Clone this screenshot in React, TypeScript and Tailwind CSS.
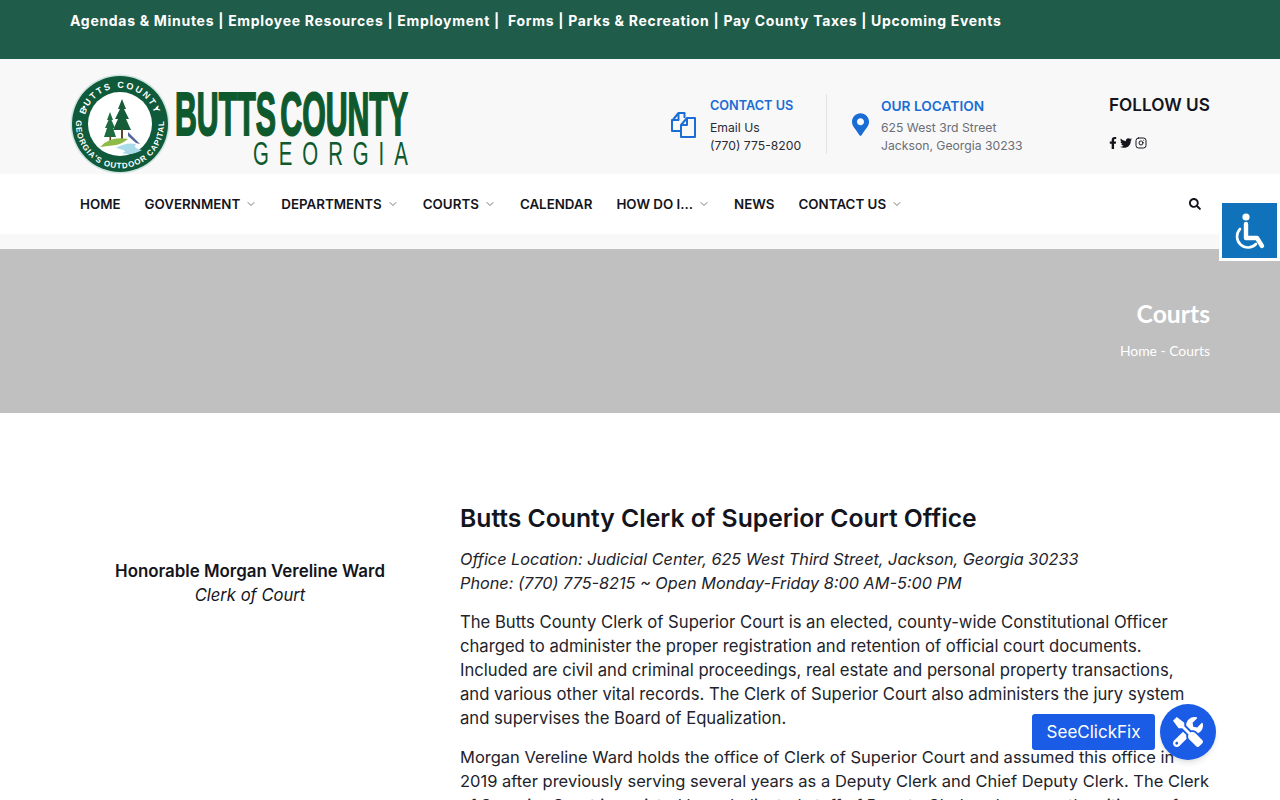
import { ChevronDown, Instagram } from "lucide-react";
import { FaFacebookF, FaTwitter, FaSearch, FaTools, FaMapMarkerAlt } from "react-icons/fa";

const TOP_LINKS = "Agendas & Minutes | Employee Resources | Employment |  Forms | Parks & Recreation | Pay County Taxes | Upcoming Events";

const NAV = [
  { label: "HOME", caret: false },
  { label: "GOVERNMENT", caret: true },
  { label: "DEPARTMENTS", caret: true },
  { label: "COURTS", caret: true },
  { label: "CALENDAR", caret: false },
  { label: "HOW DO I...", caret: true },
  { label: "NEWS", caret: false },
  { label: "CONTACT US", caret: true },
];

function Logo() {
  return (
    <svg width="340" height="100" viewBox="0 0 340 100" className="shrink-0">
      <defs>
        <path id="topArc" d="M 14 50 A 36 36 0 0 1 86 50" />
        <path id="bottomArc" d="M 7 41 A 44 44 0 1 0 93 41" />
      </defs>
      <circle cx="50" cy="50" r="49.5" fill="#cfe3e0" />
      <circle cx="50" cy="50" r="48" fill="#0e5a3a" />
      <circle cx="50" cy="50" r="32" fill="#ffffff" />
      <text fontFamily="'Liberation Sans', sans-serif" fontWeight="700" fontSize="9" fill="#ffffff" letterSpacing="2">
        <textPath href="#topArc" startOffset="50%" textAnchor="middle">BUTTS COUNTY</textPath>
      </text>
      <text fontFamily="'Liberation Sans', sans-serif" fontWeight="700" fontSize="8" fill="#ffffff" letterSpacing="0.85">
        <textPath href="#bottomArc" startOffset="50%" textAnchor="middle">GEORGIA'S OUTDOOR CAPITAL</textPath>
      </text>
      <circle cx="14" cy="33" r="1.3" fill="#ffffff" />
      <circle cx="87" cy="34" r="1.3" fill="#ffffff" />
      {/* trees and water */}
      <path d="M52 25 L56 35 L54 35 L59 45 L56 45 L61 56 L43 56 L48 45 L45 45 L50 35 L48 35 Z" fill="#175c38" />
      <path d="M40 38 L43 46 L41.5 46 L45 54 L43 54 L46 63 L34 63 L37 54 L35 54 L38.5 46 L37 46 Z" fill="#1f6b41" />
      <rect x="51" y="55" width="2" height="10" fill="#5a4a2c" />
      <rect x="39.5" y="62" width="1.6" height="5" fill="#5a4a2c" />
      <path d="M30 73 Q40 62 58 65 Q52 70 46 71 Q38 72 30 73 Z" fill="#8dbb45" />
      <path d="M46 74 Q56 68 66 70 Q62 74 72 76 Q62 82 52 79 Q60 77 46 74 Z" fill="#a9dbe9" />
      <path d="M58 58 L70 70 L66 69 L58 62 Z" fill="#54679a" />
      <text x="105" y="61" fontFamily="'Liberation Sans', sans-serif" fontWeight="700" fontSize="62" fill="#0e5a2e" textLength="233" lengthAdjust="spacingAndGlyphs" stroke="#0e5a2e" strokeWidth="2" wordSpacing="-8">BUTTS COUNTY</text>
      <text transform="translate(183 91) scale(0.6 1)" fontFamily="'Liberation Sans', sans-serif" fontSize="34" fill="#0e5a2e" textLength="258" lengthAdjust="spacing">GEORGIA</text>
    </svg>
  );
}

function CopyIcon() {
  return (
    <svg width="28" height="28" viewBox="0 0 28 28" fill="none" stroke="#1a6dd4" strokeWidth="2" strokeLinejoin="round" className="shrink-0">
      <path d="M2 11 L8.5 3 H14.5 V8" />
      <path d="M8.5 3 V10 H2 V21 H11" />
      <path d="M11 15 L17 8 H25 V27 H11 Z" />
      <path d="M17 8 V15 H11" />
    </svg>
  );
}

function WheelchairIcon() {
  return (
    <svg width="55" height="55" viewBox="0 0 55 55" fill="none" stroke="#ffffff" strokeLinecap="round" strokeLinejoin="round">
      <circle cx="24" cy="14" r="3.6" fill="#ffffff" stroke="none" />
      <path d="M24 21 V35 H35 L40 43" strokeWidth="4.4" />
      <path d="M18 26 A10.5 10.5 0 1 0 34 41" strokeWidth="2.6" />
    </svg>
  );
}

export default function App() {
  return (
    <div className="min-h-screen bg-white font-['Inter',sans-serif] text-[#14151c]">
      {/* top strip */}
      <div className="h-[59px] bg-[#1f5c4a] pl-[70px] pt-[12px]">
        <p className="whitespace-pre text-[14px] leading-[17px] font-bold tracking-[0.7px] text-white">{TOP_LINKS}</p>
      </div>

      {/* logo + contact */}
      <header className="flex h-[115px] items-center bg-[#f8f8f8] px-[70px] pt-[15px]">
        <Logo />
        <div className="ml-[260px] flex items-center gap-[12px]">
          <CopyIcon />
          <div className="w-[116px] pt-[2px]">
            <p className="text-[12.7px] leading-[20px] font-semibold text-[#1a6dd4]">CONTACT US</p>
            <p className="mt-[3px] text-[12.2px] leading-[18px] text-[#2a2a33]">Email Us<br />(770) 775-8200</p>
          </div>
        </div>
        <div className="h-[60px] w-px bg-[#e2e2e2]" />
        <div className="ml-[25px] flex items-center gap-[12px]">
          <FaMapMarkerAlt className="h-[23px] w-[17px] text-[#1a6dd4]" />
          <div className="w-[215px] pt-[3px]">
            <p className="text-[13.7px] leading-[20px] font-semibold text-[#1a6dd4]">OUR LOCATION</p>
            <p className="mt-[3px] text-[12.2px] leading-[18px] text-[#6c6d75]">625 West 3rd Street<br />Jackson, Georgia 30233</p>
          </div>
        </div>
        <div className="ml-auto -mt-[6px] w-[101px]">
          <p className="text-[17.2px] leading-[24px] font-semibold whitespace-nowrap">FOLLOW US</p>
          <div className="mt-[20px] flex items-center gap-[3px] text-[12px]">
            <FaFacebookF className="w-[8px]" />
            <FaTwitter />
            <Instagram className="size-[12px]" />
          </div>
        </div>
      </header>

      {/* main nav */}
      <nav className="flex h-[60px] items-center bg-white pl-[80px] pr-[79px]">
        <ul className="flex items-center gap-[24px]">
          {NAV.map((item) => (
            <li key={item.label} className="flex items-center gap-[5px] text-[13.35px] leading-[20px] font-semibold whitespace-nowrap">
              {item.label}
              {item.caret && <ChevronDown className="size-[12px] text-[#777777]" />}
            </li>
          ))}
        </ul>
        <FaSearch className="ml-auto text-[12px]" />
      </nav>
      <div className="h-[15px] bg-[#f8f8f8]" />

      {/* page title */}
      <section className="flex h-[164px] flex-col items-end bg-[#c0c0c0] pt-[49px] pr-[70px] text-white font-['Lato',sans-serif]">
        <h1 className="text-[24.7px] leading-[32px] font-bold">Courts</h1>
        <p className="mt-[11px] text-[13.9px] leading-[20px]">Home - Courts</p>
      </section>

      {/* content */}
      <main className="flex items-start px-[70px] pt-[89px]">
        <aside className="w-[360px] shrink-0 pt-[57px] text-center leading-[24px]">
          <p className="text-[16.9px] font-semibold">Honorable Morgan Vereline Ward</p>
          <p className="text-[16.6px] italic">Clerk of Court</p>
        </aside>
        <article className="ml-[30px] w-[750px] text-[16.5px] leading-[24px] text-[#22232b]">
          <h2 className="text-[24.7px] leading-[32px] font-semibold text-[#14151c]">Butts County Clerk of Superior Court Office</h2>
          <p className="mt-[13px] text-[16.25px] italic">
            Office Location: Judicial Center, 625 West Third Street, Jackson, Georgia 30233<br />
            Phone: (770) 775-8215 ~ Open Monday-Friday 8:00 AM-5:00 PM
          </p>
          <p className="mt-[15px] text-[16.65px]">
            The Butts County Clerk of Superior Court is an elected, county-wide Constitutional Officer charged to administer the proper registration and retention of official court documents.<br />
            Included are civil and criminal proceedings, real estate and personal property transactions,<br />
            and various other vital records. The Clerk of Superior Court also administers the jury system<br />
            and supervises the Board of Equalization.
          </p>
          <p className="mt-[15px]">
            Morgan Vereline Ward holds the office of Clerk of Superior Court and assumed this office in 2019 after previously serving several years as a Deputy Clerk and Chief Deputy Clerk. The Clerk of Superior Court is assisted by a dedicated staff of Deputy Clerks who serve the citizens of Butts County.
          </p>
        </article>
      </main>

      {/* floating widgets */}
      <div className="fixed top-[200px] right-0 border-[3px] border-white bg-[#0f72ba]">
        <WheelchairIcon />
      </div>
      <div className="fixed right-[64px] bottom-[40px] flex items-center">
        <a className="flex h-[36px] w-[123px] items-center justify-center rounded-[3px] bg-[#1a5ce6] pt-[1px] text-[17px] text-white">SeeClickFix</a>
        <span className="ml-[5px] flex size-[56px] items-center justify-center rounded-full bg-[#1a5ce6] text-white shadow-md">
          <FaTools className="size-[30px]" />
        </span>
      </div>
    </div>
  );
}
